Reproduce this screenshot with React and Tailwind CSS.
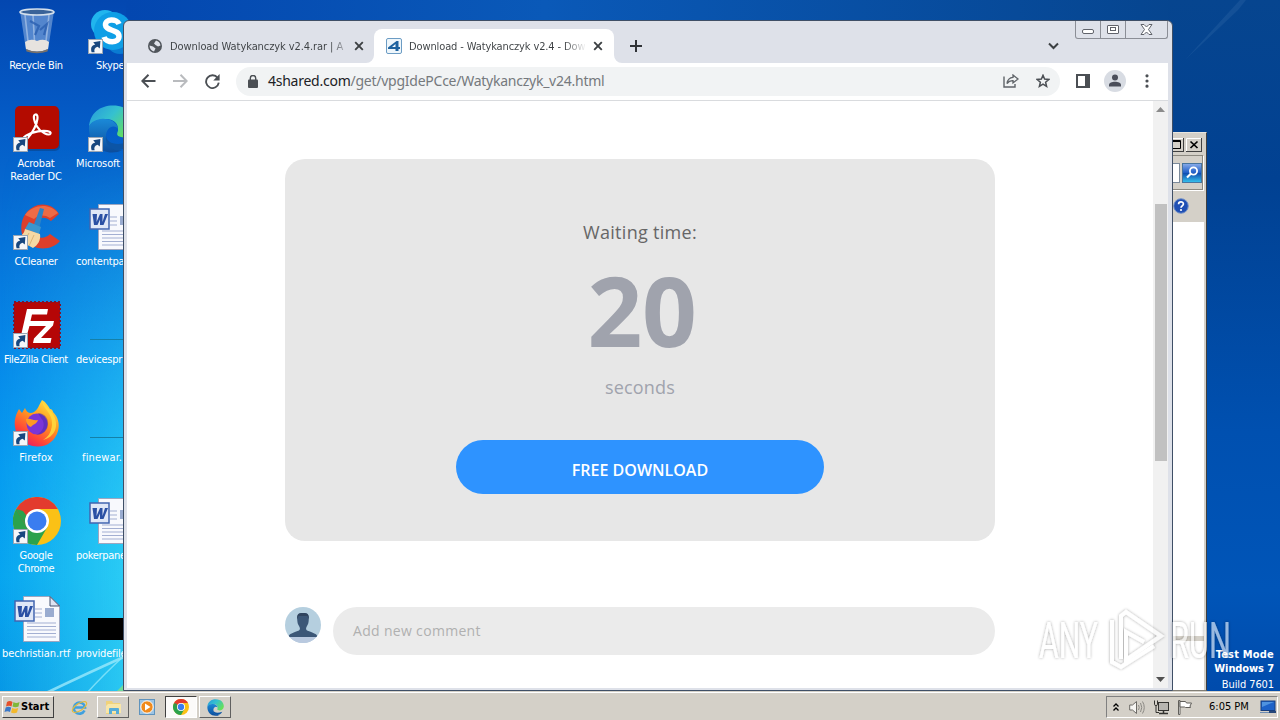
import React from "react";

const UI = "font-['DejaVu_Sans_Condensed','DejaVu_Sans',sans-serif]";

function Wallpaper() {
  return (
    <svg className="absolute inset-0" width="1280" height="720" viewBox="0 0 1280 720">
      <defs>
        <linearGradient id="wl" x1="0" y1="0" x2="0" y2="1">
          <stop offset="0" stopColor="#0347b0" />
          <stop offset="0.15" stopColor="#0459c4" />
          <stop offset="0.33" stopColor="#0672d8" />
          <stop offset="0.5" stopColor="#078aea" />
          <stop offset="0.65" stopColor="#079cf0" />
          <stop offset="0.8" stopColor="#08a6f0" />
          <stop offset="1" stopColor="#0795e4" />
        </linearGradient>
        <linearGradient id="wx" x1="0" y1="0" x2="1" y2="0">
          <stop offset="0" stopColor="#36d8f6" stopOpacity="0" />
          <stop offset="1" stopColor="#36d8f6" stopOpacity="0.75" />
        </linearGradient>
        <linearGradient id="wm" x1="0" y1="0" x2="0" y2="1">
          <stop offset="0.2" stopColor="#000" />
          <stop offset="0.75" stopColor="#fff" />
        </linearGradient>
        <mask id="mk"><rect width="126" height="720" fill="url(#wm)" /></mask>
        <linearGradient id="wr" x1="0" y1="0" x2="0" y2="1">
          <stop offset="0" stopColor="#06458f" />
          <stop offset="0.25" stopColor="#014192" />
          <stop offset="0.6" stopColor="#0050b0" />
          <stop offset="0.82" stopColor="#0055b8" />
          <stop offset="1" stopColor="#0048a8" />
        </linearGradient>
        <linearGradient id="wt" x1="0" y1="0" x2="1" y2="0">
          <stop offset="0" stopColor="#0347b0" />
          <stop offset="0.4" stopColor="#0a59b8" />
          <stop offset="1" stopColor="#06458f" />
        </linearGradient>
      </defs>
      <rect width="126" height="720" fill="url(#wl)" />
      <rect width="126" height="720" fill="url(#wx)" mask="url(#mk)" />
      <rect x="126" width="1046" height="30" fill="url(#wt)" />
      <rect x="1168" width="112" height="720" fill="url(#wr)" />
      <path d="M1185 60 L1238 10 L1246 0 L1240 0 Z" fill="#5f8fc0" opacity="0.16" />
      <path d="M44 694 Q90 672 126 656" stroke="#9be8fb" strokeWidth="2.5" fill="none" opacity="0.8" />
      <path d="M86 694 Q102 676 126 654" stroke="#8ce6fa" strokeWidth="1.5" fill="none" opacity="0.8" />
      <path d="M116 692 L126 682 V692 Z" fill="#6fdc9a" />
    </svg>
  );
}

function Shortcut() {
  return (
    <svg className="absolute bottom-[1px] left-0" width="15" height="15" viewBox="0 0 15 15">
      <rect x="0.5" y="0.5" width="14" height="14" fill="#f4f6f9" stroke="#9aa6b4" />
      <path d="M3.6 13.2 C2.4 9 3.6 6.4 7.2 5.6 L5.2 3.2 L12.4 2 L11.8 9.4 L9.6 7.8 C6.8 8.6 5.8 10.2 6.6 13.2 Z" fill="#17477f" />
    </svg>
  );
}

function RecycleBin() {
  return (
    <svg width="48" height="48" viewBox="0 0 48 48">
      <path d="M7 4 L41 4 L35 43 Q24 48 13 43 Z" fill="#88aede" opacity="0.6" />
      <path d="M12 8 L16 43 M20 8 L22 44 M36 8 L32 43" stroke="#c6d8f0" strokeWidth="1.6" opacity="0.55" />
      <path d="M17 14 L26 19 L22 28 M27 23 L34 17 L31 28" stroke="#2b5fb0" strokeWidth="2.2" fill="none" opacity="0.8" />
      <path d="M12 35 Q18 31 24 34 Q31 31 36 35 L35 42 Q24 47 13 42 Z" fill="#e7e3df" />
      <path d="M13 42 Q24 47 35 42 L34.500 44.500 Q24 48 13.500 44.500 Z" fill="#77706a" />
      <ellipse cx="24" cy="5" rx="17" ry="3" fill="#3a6399" stroke="#d5e0ec" strokeWidth="1.6" />
    </svg>
  );
}

function Skype() {
  return (
    <svg width="48" height="48" viewBox="0 0 48 48">
      <circle cx="17" cy="17" r="14" fill="#21b5ee" />
      <circle cx="32" cy="33" r="14" fill="#0a7bd2" />
      <circle cx="25" cy="24" r="19" fill="#0f9fe6" />
      <path d="M31 17 C29 11.500 17 11.500 17.500 18 C18 24.500 31 22 31 29.500 C31 36.500 18 36 16 30" stroke="#fff" strokeWidth="5.500" fill="none" />
    </svg>
  );
}

function Acrobat() {
  return (
    <svg width="48" height="48" viewBox="0 0 48 48">
      <rect x="2" y="3" width="45" height="43" rx="5" fill="#0a3c7c" opacity="0.5" />
      <rect x="2" y="1" width="44" height="43" rx="5" fill="#b30b00" />
      <path d="M22.500 9.500 C26 9 24.500 17 21.500 23 C18 30 12 37.500 10 35.500 C8 33 16 27.500 25 26.300 C32 25.400 38.500 26 37.500 28.500 C36 31.500 27.500 27.500 24 21.500 C21 16.500 19.500 10 22.500 9.500 Z" fill="none" stroke="#fff" strokeWidth="2.200" />
    </svg>
  );
}

function Edge({ size = 48 }) {
  return (
    <svg width={size} height={size} viewBox="0 0 48 48">
      <defs>
        <linearGradient id="eg1" x1="0" y1="0" x2="1" y2="0.6">
          <stop offset="0" stopColor="#2697dc" /><stop offset="0.5" stopColor="#35c1cf" /><stop offset="1" stopColor="#66e05a" />
        </linearGradient>
        <linearGradient id="eg2" x1="0" y1="0" x2="0" y2="1">
          <stop offset="0" stopColor="#1b8ad8" /><stop offset="1" stopColor="#0b4c9c" />
        </linearGradient>
      </defs>
      <path d="M1 22 C2 8 12 0.500 25 0.500 C40 0.500 48 11 47.500 21 C47 30 39 33 33 32 C28 31 29 28 30 26 C31 18 25 14 18 14 C9 14 2 18 1 22 Z" fill="url(#eg1)" />
      <path d="M1 22 C2 17 10 13 17 14 C25 14 30 20 30 24 C25 18 17 24 18 33 C19 40 27 47 35 45 C18 53 0 41 1 22 Z" fill="url(#eg2)" />
      <path d="M18 31 C19 38 28 42 43 36 C39 43 33 46 27 45 C20 42 17 37 18 31 Z" fill="#0c55a6" />
    </svg>
  );
}

function CCleaner() {
  return (
    <svg width="48" height="48" viewBox="0 0 48 48">
      <path d="M46 11 L38 18 C31 12 23 14 21 24 C20 35 30 38 37 31 L47 38 C38 49 17 48 10 34 C5 21 11 6 25 2 C34 0 42 4 46 11 Z" fill="#dd3f2b" />
      <path d="M45 10 L37 15 C31 11 25 12 21 16 L12 12 C20 1 37 0 45 10 Z" fill="#ee6b45" />
      <path d="M27 5 L31 6 L26 26 L20 24 Z" fill="#2c83c7" />
      <path d="M16 19 L28 24 L26 31 L12 26 Z" fill="#3b96ce" />
      <path d="M12 26 L27 31 C28 37 25 42 20 45 L2 35 C8 34 11 31 12 26 Z" fill="#f5d9a4" />
      <path d="M16 30 L11 39 M21 32 L16 43" stroke="#dcb377" strokeWidth="1" />
    </svg>
  );
}

function FileZilla() {
  return (
    <svg width="48" height="48" viewBox="0 0 48 48">
      <rect x="1" y="1" width="46" height="46" fill="#b50606" />
      <rect x="1" y="1" width="46" height="46" fill="none" stroke="#7c1430" strokeWidth="2" strokeDasharray="2 2" />
      <path d="M14 8 H35 L34 13.500 H19 L17.500 20 H28 L27 25 H16.500 L12.500 39 H7 Z" fill="#fff" />
      <path d="M25 20 H41 L40 24.500 L28 37 H38.500 L37.500 42 H20 L21 37.500 L33 25 H24 Z" fill="#fff" />
    </svg>
  );
}

function Firefox() {
  return (
    <svg width="48" height="48" viewBox="0 0 48 48">
      <defs>
        <linearGradient id="ff" x1="0.8" y1="0" x2="0.2" y2="1">
          <stop offset="0" stopColor="#ffe84a" /><stop offset="0.4" stopColor="#ff9a1f" /><stop offset="0.75" stopColor="#ff4438" /><stop offset="1" stopColor="#e3166b" />
        </linearGradient>
      </defs>
      <path d="M29 1 C33 3 35 7 37 10 C39 10 40 12 40 13 C45 18 47 25 45 32 C42 42 34 48 24 47.500 C12 47 3 39 2 28 C1 21 3 15 6 10 L9 14 L12 9 C13 12 15 14 18 14 C24 13 25 8 29 1 Z" fill="url(#ff)" />
      <circle cx="24" cy="25" r="10.500" fill="#7a35d8" />
      <path d="M13 20 C18 19 20 22 25 21 C24 25 20 25 18 28 C15 27 13 24 13 20 Z" fill="#ff9a22" />
      <path d="M25 14 C31 14 36 19 35 26 C34 33 28 36 23 36 C31 33 33 24 28 19 Z" fill="#4a2aa8" opacity="0.5" />
      <path d="M29 2 C30 10 40 14 39 26 C38 34 35 38 30 41 C42 38 46 27 41 17 C38 11 33 8 29 2 Z" fill="#ffdb3d" opacity="0.85" />
    </svg>
  );
}

function Chrome({ size = 48 }) {
  return (
    <svg width={size} height={size} viewBox="0 0 48 48">
      <circle cx="24" cy="24" r="24" fill="#fbc116" />
      <path d="M24 24 L3.200 12 A24 24 0 0 1 44.800 12 Z" fill="#e33b2e" />
      <path d="M24 12 H44.800 L34.400 30 Z" fill="#fbc116" />
      <path d="M3.200 12 A24 24 0 0 0 24 48 L34.400 30 L24 30 Z" fill="#2ba24c" />
      <path d="M3.200 12 L13.600 30 L24 24 L24 12 Z" fill="#e33b2e" />
      <path d="M3.200 12 L13.600 30 L16 22 L10 14 Z" fill="#2ba24c" />
      <circle cx="24" cy="24" r="12" fill="#fff" />
      <circle cx="24" cy="24" r="9.500" fill="#3a7df0" />
    </svg>
  );
}

function WordDoc() {
  return (
    <svg width="48" height="48" viewBox="0 0 48 48">
      <path d="M10.500 1.500 H37 L46.500 11 V46.500 H10.500 Z" fill="#f8f9fd" stroke="#9da6c0" />
      <path d="M37 1.500 V11 H46.500 Z" fill="#dde3f2" stroke="#42506e" />
      <path d="M22 14 H29 M22 18 H29 M22 22 H29 M14 28 H43 M14 31.500 H43 M14 35 H43 M14 38.500 H43 M14 42 H43" stroke="#a3afd2" />
      <rect x="32" y="13" width="9" height="9" fill="#9aacd0" />
      <rect x="2" y="6" width="19" height="20" fill="#dfe7f7" stroke="#4265b0" strokeWidth="1.500" />
      <path d="M4.500 11 H9 L8.500 19 L12 11 H14.500 L14.500 19 L17 11 H20 L15.500 22 H12 L12 16.500 L9.500 22 H6 Z" fill="#2a50a4" />
    </svg>
  );
}

function DesktopIcon({ icon, shortcut, children }) {
  return (
    <div className="flex h-[98px] w-[74px] flex-col items-center pt-[7px]">
      <div className="relative -ml-px h-12 w-12 shrink-0">{icon}{shortcut && <Shortcut />}</div>
      <div className="mt-1 -ml-[2px] text-center text-[11px] leading-[13px] whitespace-nowrap text-white">{children}</div>
    </div>
  );
}

function DesktopIconCut({ icon, shortcut, children }) {
  return (
    <div className="flex h-[98px] w-[49px] flex-col pt-[7px]">
      <div className="relative ml-[14px] h-12 w-12 shrink-0">{icon}{shortcut && <Shortcut />}</div>
      <div className="mt-1 ml-[2px] text-[11px] leading-[13px] whitespace-nowrap text-white">{children}</div>
    </div>
  );
}

function Line() {
  return <svg width="48" height="48" viewBox="0 0 48 48"><path d="M2 38.500 H48" stroke="#1480a8" /></svg>;
}

function Desktop() {
  return (
    <div className="relative flex flex-1">
      <div className="flex w-[74px] flex-col">
        <DesktopIcon icon={<RecycleBin />}><span className="tracking-[-0.3px]">Recycle Bin</span></DesktopIcon>
        <DesktopIcon icon={<Acrobat />} shortcut><span className="tracking-[-0.15px]">Acrobat<br />Reader DC</span></DesktopIcon>
        <DesktopIcon icon={<CCleaner />} shortcut><span className="tracking-[-0.25px]">CCleaner</span></DesktopIcon>
        <DesktopIcon icon={<FileZilla />} shortcut><span className="tracking-[-0.35px]">FileZilla Client</span></DesktopIcon>
        <DesktopIcon icon={<Firefox />} shortcut><span className="tracking-[0.1px]">Firefox</span></DesktopIcon>
        <DesktopIcon icon={<Chrome />} shortcut><span className="tracking-[-0.35px]">Google<br />Chrome</span></DesktopIcon>
        <DesktopIcon icon={<WordDoc />}><span className="tracking-[-0.1px]">bechristian.rtf</span></DesktopIcon>
      </div>
      <div className="flex w-[49px] flex-col">
        <DesktopIconCut icon={<Skype />} shortcut><span className="ml-5 tracking-[-0.3px]">Skype</span></DesktopIconCut>
        <DesktopIconCut icon={<Edge />} shortcut><span className="tracking-[-0.1px]">Microsoft</span></DesktopIconCut>
        <DesktopIconCut icon={<WordDoc />}><span className="tracking-[-0.2px]">contentpa</span></DesktopIconCut>
        <DesktopIconCut icon={<Line />}><span className="tracking-[-0.2px]">devicespr</span></DesktopIconCut>
        <DesktopIconCut icon={<Line />}><span className="ml-[6px] tracking-[0.15px]">finewar.</span></DesktopIconCut>
        <DesktopIconCut icon={<WordDoc />}><span className="tracking-[-0.3px]">pokerpane</span></DesktopIconCut>
        <DesktopIconCut icon={<svg width="48" height="48"><rect y="23" width="48" height="22" /></svg>}><span className="tracking-[-0.15px]">providefile</span></DesktopIconCut>
      </div>
    </div>
  );
}

function ExplorerWindow() {
  return (
    <div className="absolute top-[132px] left-[1140px] flex h-[559px] w-[67px] flex-col border border-t-[#e8e6e0] border-r-[#404040] border-b-[#807d75] bg-[#d4d0c8] pr-[2px]">
      <div className="flex h-[22px] items-start justify-end gap-[2px] pt-[5px] pr-[2px]">
        <svg width="16" height="14" viewBox="0 0 16 14"><path d="M0 0H16V14H0Z" fill="#d4d0c8" /><path d="M0 .5H15" stroke="#fff" /><path d="M15.500 0V14M0 13.500H16" stroke="#404040" /><path d="M3.500 2.500H12.500V10.500H3.500ZM3 3.500H13" fill="none" stroke="#000" /></svg>
        <svg width="16" height="14" viewBox="0 0 16 14"><path d="M0 0H16V14H0Z" fill="#d4d0c8" /><path d="M.5 14V.5H15" fill="none" stroke="#fff" /><path d="M15.500 0V14M0 13.500H16" stroke="#404040" /><path d="M4.500 3.500 L11.500 10 M11.500 3.500 L4.500 10" stroke="#000" strokeWidth="1.700" /></svg>
      </div>
      <div className="mr-px flex h-[35px] items-center justify-end border border-l-0 border-[#8c8980] shadow-[1px_1px_0_#fff]">
        <div className="mr-[2px] h-[20px] w-[30px] border border-[#7b8a9b] bg-white" />
        <svg width="20" height="20" viewBox="0 0 20 20">
          <defs><linearGradient id="sg" x1="0" y1="0" x2="0" y2="1"><stop stopColor="#8badea" /><stop offset="0.48" stopColor="#1f5ec8" /><stop offset="0.5" stopColor="#0f49ad" /><stop offset="1" stopColor="#36c4ee" /></linearGradient></defs>
          <rect x="0.500" y="0.500" width="19" height="19" fill="url(#sg)" stroke="#48759f" />
          <circle cx="11.500" cy="8" r="3.600" fill="none" stroke="#fff" strokeWidth="1.800" /><path d="M9 10.500 L5 14.500" stroke="#fff" strokeWidth="2.200" />
        </svg>
      </div>
      <div className="flex h-[32px] items-center justify-end">
        <svg className="mr-[15px]" width="16" height="16" viewBox="0 0 16 16">
          <circle cx="8" cy="8" r="7.300" fill="#1f4fb4" stroke="#7693c8" /><path d="M5.600 6.200 C5.600 3.200 10.400 3.200 10.400 6 C10.400 7.800 8 8 8 9.800" fill="none" stroke="#fff" strokeWidth="1.700" /><circle cx="8" cy="12" r="1.100" fill="#fff" />
        </svg>
      </div>
      <div className="flex-1 bg-white" />
      <div className="h-[5px] bg-[#d4d0c8]" />
      <div className="h-[49px] bg-white" />
    </div>
  );
}

function CloseX({ className }) {
  return <svg className={className} width="10" height="10" viewBox="0 0 10 10"><path d="M1.200 1.200 L8.800 8.800 M8.800 1.200 L1.200 8.800" stroke="#3c4043" strokeWidth="1.900" /></svg>;
}

function CaptionButtons() {
  return (
    <div className="flex h-[18px] w-[93px] rounded-b-[3px] border border-t-0 border-[#8b8e96]">
      <div className="flex w-[25px] items-end justify-center border-r border-[#8b8e96] pb-[4px]">
        <div className="h-[5px] w-3 rounded-[2px] border border-[#60636b] bg-white" />
      </div>
      <div className="flex w-[25px] items-center justify-center border-r border-[#8b8e96] pb-px">
        <div className="flex h-[9px] w-3 items-center justify-center rounded-[1px] border border-[#60636b] bg-white"><div className="h-[4px] w-[6px] border border-[#60636b]" /></div>
      </div>
      <div className="flex flex-1 items-center justify-center pb-px">
        <svg width="13" height="11" viewBox="0 0 13 11"><path d="M1 .5H4L6.500 3 9 .5H12L8.500 5.500 12 10.500H9L6.500 8 4 10.500H1L4.500 5.500Z" fill="#fff" stroke="#60636b" /></svg>
      </div>
    </div>
  );
}

function TabStrip() {
  return (
    <div className="flex h-[42px] shrink-0 items-end">
      <div className="flex h-[34px] w-[247px] items-center pl-[21px]">
        <svg width="14" height="14" viewBox="0 0 14 14"><circle cx="7" cy="7" r="7" fill="#50555b" /><path d="M8 1.500 C10.500 2 12.300 4 12.500 6.500 L10 7.500 L7.500 6 L6 4.500 Z M1.500 6.500 L5 7.500 L7.500 9.500 L6 12.500 C3.500 12 1.600 9.500 1.500 6.500 Z" fill="#dee1e9" /></svg>
        <div className="ml-2 w-[178px] overflow-hidden bg-linear-to-r from-[#3c4043] from-90% to-[#3c404320] bg-clip-text pt-px text-[11px] leading-[14px] tracking-[-0.08px] whitespace-nowrap text-transparent">Download Watykanczyk v2.4.rar | A</div>
        <CloseX className="ml-[6px]" />
      </div>
      <div className="relative flex h-[34px] w-[240px] items-center rounded-t-lg bg-white pl-3">
        <svg className="absolute bottom-0 -left-2" width="8" height="8"><path d="M8 0V8H0A8 8 0 0 0 8 0Z" fill="#fff" /></svg>
        <svg className="absolute -right-2 bottom-0" width="8" height="8"><path d="M0 0V8H8A8 8 0 0 1 0 0Z" fill="#fff" /></svg>
        <svg width="16" height="16" viewBox="0 0 16 16"><rect x="0.500" y="0.500" width="15" height="15" rx="1.500" fill="#eef6fb" stroke="#6c9cc4" /><path d="M10.500 3 H12.500 V9 H14 V11 H12.500 V13 H9.500 V11 H2 V9.500 Z M9.500 6 L6 9 H9.500 Z" fill="#1e629f" fillRule="evenodd" /></svg>
        <div className="ml-[7px] w-[176px] overflow-hidden bg-linear-to-r from-[#3c4043] from-88% to-[#3c404310] bg-clip-text pt-px text-[11px] leading-[14px] tracking-[-0.12px] whitespace-nowrap text-transparent">Download - Watykanczyk v2.4 - Dow</div>
        <CloseX className="ml-[8px]" />
      </div>
      <svg className="mb-[11px] ml-[16px]" width="12" height="12" viewBox="0 0 12 12"><path d="M6 0V12M0 6H12" stroke="#303337" strokeWidth="2" /></svg>
      <svg className="mb-[13px] ml-[406px]" width="11" height="8" viewBox="0 0 11 8"><path d="M1 1.500 L5.500 6 L10 1.500" fill="none" stroke="#3c4043" strokeWidth="2" /></svg>
      <div className="ml-[16px] self-start"><CaptionButtons /></div>
    </div>
  );
}

function Toolbar() {
  return (
    <div className="flex h-[38px] shrink-0 items-center border-b border-[#d9dbde] bg-white pb-px pl-[14px]">
      <svg width="15" height="14" viewBox="0 0 15 14"><path d="M14.500 7H2M7.500 .8 L1.300 7 L7.500 13.200" fill="none" stroke="#4b4f54" strokeWidth="2" /></svg>
      <svg className="ml-[17px]" width="15" height="14" viewBox="0 0 15 14"><path d="M0 7H13M7.500 .8 L13.700 7 L7.500 13.200" fill="none" stroke="#b9bbbe" strokeWidth="2" /></svg>
      <svg className="ml-[17px]" width="15" height="15" viewBox="0 0 16 16"><path d="M13.500 4.200 A6.800 6.800 0 1 0 14.700 9.300" fill="none" stroke="#4b4f54" strokeWidth="2" /><path d="M15.600 0V6.800H8.800Z" fill="#4b4f54" /></svg>
      <div className="ml-[16px] flex h-[29px] w-[824px] items-center rounded-full bg-[#f1f3f4] pl-3">
        <svg width="10" height="13" viewBox="0 0 10 13"><rect y="4.500" width="10" height="8.500" rx="1" fill="#4b4f54" /><path d="M2.300 5V3.200a2.700 2.700 0 0 1 5.400 0V5" fill="none" stroke="#4b4f54" strokeWidth="1.400" /></svg>
        <div className="ml-[10px] flex-1 font-['Noto_Sans',sans-serif] text-[14px] leading-[18px] tracking-[-0.25px] text-[#75797d]"><span className="text-[#202124]">4shared.com</span>/get/vpgIdePCce/Watykanczyk_v24.html</div>
        <svg width="16" height="14" viewBox="0 0 16 14"><path d="M1 2.500V13H12V10" fill="none" stroke="#5f6368" strokeWidth="1.400" /><path d="M10 1 L15 5 L10 9 V6.700 C7.500 6.500 5.500 7.500 4 9.500 C4.500 6 6.500 3.700 10 3.400Z" fill="none" stroke="#5f6368" strokeWidth="1.300" /></svg>
        <svg className="mr-[10px] ml-[17px]" width="14" height="14" viewBox="0 0 14 14"><path d="M7 1.300 L8.600 5.100 L12.800 5.500 L9.600 8.300 L10.600 12.400 L7 10.200 L3.400 12.400 L4.400 8.300 L1.200 5.500 L5.400 5.100Z" fill="none" stroke="#4b4f54" strokeWidth="1.500" /></svg>
      </div>
      <svg className="ml-[16px]" width="14" height="14" viewBox="0 0 14 14"><path d="M1 1H13V13H1Z" fill="#fff" stroke="#4b4f54" strokeWidth="2" /><path d="M9 0H14V14H9Z" fill="#4b4f54" /></svg>
      <svg className="ml-[14px]" width="22" height="22" viewBox="0 0 22 22"><circle cx="11" cy="11" r="11" fill="#d8dce3" /><circle cx="11" cy="7.500" r="3" fill="#4a4e5a" /><path d="M5 16.500V15C5 12.500 8 11.700 11 11.700S17 12.500 17 15V16.500Z" fill="#4a4e5a" /></svg>
      <svg className="ml-[19px]" width="4" height="14" viewBox="0 0 4 14"><path d="M2 .2a1.600 1.600 0 1 1 0 3.200a1.600 1.600 0 1 1 0-3.200M2 5.400a1.600 1.600 0 1 1 0 3.200a1.600 1.600 0 1 1 0-3.200M2 10.600a1.600 1.600 0 1 1 0 3.200a1.600 1.600 0 1 1 0-3.200" fill="#4b4f54" /></svg>
    </div>
  );
}

function Avatar() {
  return (
    <svg className="shrink-0" width="36" height="36" viewBox="0 0 36 36">
      <defs><clipPath id="av"><circle cx="18" cy="18" r="18" /></clipPath></defs>
      <g clipPath="url(#av)">
        <rect width="36" height="36" fill="#b5cfdf" /><rect y="30" width="36" height="6" fill="#b9c9df" />
        <path d="M3.500 30 C4 26.500 8 26 14 23.500 C15.500 22.500 15 20.500 14 19 C13 17.500 12.500 16 12.300 13.500 C11.500 5.500 15 6 18 6 C21 6 24.500 5.500 23.700 13.500 C23.500 16 23 17.500 22 19 C21 20.500 20.500 22.500 22 23.500 C28 26 32 26.500 32.500 30 Z" fill="#3c5777" />
        <path d="M12.300 12.500 C11.500 6.500 14.500 6 18 6 C21.500 6 24.500 6.500 23.700 12.500 L22.500 9 H13.500 Z" fill="#30445e" />
      </g>
    </svg>
  );
}

function Page() {
  return (
    <div className="flex min-h-0 flex-1 bg-white font-['Open_Sans',sans-serif]">
      <div className="flex flex-1 flex-col pt-[58px] pl-[158px]">
        <div className="flex h-[382px] w-[710px] flex-col items-center rounded-[20px] bg-[#e7e7e7]">
          <div className="mt-[59px] h-[28px] text-[18px] leading-[28px] tracking-[0.3px] text-[#666]">Waiting time:</div>
          <div className="mt-[16px] h-[98px] pl-[4px] text-[96px] leading-[96px] font-bold tracking-[-0.5px] text-[#a0a3ad]">20</div>
          <div className="mt-[13px] h-[28px] text-[18px] leading-[28px] tracking-[0.2px] text-[#a0a3ad]">seconds</div>
          <div className="mt-[39px] flex h-[54px] w-[368px] items-center justify-center rounded-full bg-[#2e93ff] pt-[6px] text-[16px] font-semibold text-white">FREE DOWNLOAD</div>
        </div>
        <div className="mt-[66px] flex gap-3">
          <Avatar />
          <div className="flex h-12 w-[662px] items-center rounded-full bg-[#ebebeb] pb-[2px] pl-5 text-[14px] tracking-[0.32px] text-[#b0b0b0]">Add new comment</div>
        </div>
      </div>
      <div className="flex w-[15px] flex-col items-center bg-[#f1f1f1]">
        <svg className="mt-[6px]" width="9" height="5"><path d="M0 5 L4.500 0 L9 5Z" fill="#8b8b8b" /></svg>
        <div className="mt-[92px] ml-px h-[257px] w-3 bg-[#c1c1c1]" />
        <svg className="mt-auto mb-[6px]" width="9" height="5"><path d="M0 0 L4.500 5 L9 0Z" fill="#505050" /></svg>
      </div>
    </div>
  );
}

function Browser() {
  return (
    <div className="absolute top-5 left-[123px] flex h-[671px] w-[1050px] flex-col overflow-hidden rounded-t-[6px] border border-[#3f4f66] bg-[#dee1e9] pr-[4px] pb-[2px] pl-[3px]">
      <TabStrip />
      <Toolbar />
      <Page />
    </div>
  );
}

function Taskbar() {
  return (
    <div className="relative flex h-[29px] items-start border-t border-[#d4d0c8] bg-[#d4d0c8] pt-1 shadow-[inset_0_1px_0_#fff]">
      <div className="ml-[2px] flex h-[22px] w-[52px] items-center border border-t-white border-r-[#404040] border-b-[#404040] border-l-white pl-[1px]">
        <svg width="17" height="16" viewBox="0 0 17 16">
          <path d="M3 3 C5 1.500 7 2 8.500 3 L7.500 7.500 C6 6.500 4 6.500 2 7.500Z" fill="#e5502a" /><path d="M9.500 3 C11.500 4.500 13.500 4 15.500 3 L14.500 7.500 C12.500 8.500 10.500 8.500 8.500 7.500Z" fill="#7fb83a" />
          <path d="M1.700 8.500 C3.500 7.500 5.500 7.700 7.200 8.500 L6 13 C4.500 12 2.500 12 .5 13Z" fill="#3a78c8" /><path d="M8.200 9 C10 10 12 10 14.200 9 L13 13.500 C11 14.500 9 14.500 7 13.500Z" fill="#f3b92c" />
        </svg>
        <span className="text-[11px] font-bold text-black">Start</span>
      </div>
      <svg className="mt-[3px] ml-[17px]" width="17" height="17" viewBox="0 0 17 17"><path d="M13.500 11.500 A5.600 5.600 0 1 1 14 8.500 H4" fill="none" stroke="#3fa0de" strokeWidth="2.600" /><ellipse cx="8.500" cy="8" rx="8.300" ry="3.500" transform="rotate(-33 8.500 8)" fill="none" stroke="#e3bb3c" strokeWidth="1.200" /></svg>
      <div className="ml-[9px] flex h-[22px] w-[32px] items-center justify-center border border-t-white border-r-[#606060] border-b-[#606060] border-l-white">
        <svg width="17" height="16" viewBox="0 0 17 16"><path d="M1 2H7L8 4H15V15H1Z" fill="#f0d27a" /><path d="M3 5H16V14H1V7Z" fill="#f8e6a8" /><path d="M4 15V10Q4 9 5 9H13Q14 9 14 10V15H11V12H7V15Z" fill="#58acd8" /></svg>
      </div>
      <svg className="mt-[3px] ml-[10px]" width="16" height="16" viewBox="0 0 16 16"><rect x="0.500" y="0.500" width="15" height="15" fill="#9cc4e4" stroke="#5f93bd" /><circle cx="8" cy="8" r="6.200" fill="#f08a1c" stroke="#fff" /><path d="M6 4.500V11.500L11.500 8Z" fill="#fff" /></svg>
      <div className="ml-[10px] flex h-[22px] w-[32px] items-center justify-center border border-t-[#404040] border-r-white border-b-white border-l-[#404040] bg-[#fbfaf9]"><Chrome size={16} /></div>
      <div className="ml-[2px] flex h-[22px] w-[32px] items-center justify-center border border-t-white border-r-[#606060] border-b-[#606060] border-l-white"><Edge size={17} /></div>
      <div className="mr-[2px] ml-auto flex h-[22px] w-[172px] items-center border border-t-[#808080] border-r-white border-b-white border-l-[#808080] pl-[6px]">
        <svg width="6" height="8" viewBox="0 0 6 8"><path d="M.5 3.500 L3 1 L5.500 3.500M.5 7.500 L3 5 L5.500 7.500" fill="none" stroke="#000" strokeWidth="1.300" /></svg>
        <svg className="ml-[10px]" width="16" height="15" viewBox="0 0 16 15"><path d="M.7 5H3.500L7.500 1.500V13.500L3.500 10H.7Z" fill="#f6f5f2" stroke="#6c6a66" /><path d="M9.500 5Q11 7.500 9.500 10M11.500 3Q14 7.500 11.500 12M13.500 1.500Q17 7.500 13.500 13.500" fill="none" stroke="#8b8984" /></svg>
        <svg className="ml-[8px]" width="17" height="15" viewBox="0 0 17 15"><rect x="5.500" y="2.500" width="10" height="8" fill="#b7b5b0" stroke="#33322f" /><path d="M6 13.500H15M10.500 11V13" stroke="#33322f" strokeWidth="1.500" /><path d="M1.500 .5V4.500Q1.500 5.500 3 5.500T4.500 4.500V.5M3 5.500V12.500H6" fill="none" stroke="#33322f" /></svg>
        <svg className="ml-[7px]" width="16" height="15" viewBox="0 0 16 15"><path d="M1.500 .5H3V14.500H1.500Z" fill="#fff" stroke="#605e5a" /><path d="M3 1.500H8.500L9.500 3H14.500L13 6L13.500 7.500H8.500L7.500 7H3Z" fill="#fff" stroke="#605e5a" /></svg>
        <span className="ml-[16px] text-[11px] whitespace-nowrap text-black">6:05 PM</span>
        <svg className="mr-[1px] ml-auto" width="16" height="14" viewBox="0 0 16 14"><rect x="1" y="1" width="14" height="9.500" fill="#1d62c8" stroke="#173e7e" /><path d="M2 2H14L2 7Z" fill="#4f93e0" /><path d="M0 12.500H9" stroke="#6d8cb3" /><path d="M9 12H16" stroke="#25477a" strokeWidth="2" /></svg>
      </div>
    </div>
  );
}

function Watermark() {
  return (
    <svg className="absolute top-[604px] left-[1034px]" width="204" height="72" viewBox="0 0 204 72">
      <defs><filter id="sh" x="-10%" y="-10%" width="120%" height="120%"><feDropShadow dx="0" dy="0" stdDeviation="1.800" floodColor="#000" floodOpacity="0.6" /></filter></defs>
      <g filter="url(#sh)" opacity="0.6">
        <text x="5" y="54" fontSize="50" textLength="59" lengthAdjust="spacingAndGlyphs" fill="#fff" className="font-['Roboto',sans-serif]">ANY</text>
        <text x="136" y="54" fontSize="50" textLength="61" lengthAdjust="spacingAndGlyphs" fill="#fff" className="font-['Roboto',sans-serif]">RUN</text>
        <path d="M87 55 V12 L92 8 L127 32 L92 56 V28 L110 38" fill="none" stroke="#fff" strokeWidth="4" />
        <path d="M78 16 V58 L87 63 L120 42" fill="none" stroke="#fff" strokeWidth="4" />
      </g>
    </svg>
  );
}

export default function App() {
  return (
    <div className={`relative flex h-[720px] w-[1280px] flex-col overflow-hidden ${UI}`}>
      <Wallpaper />
      <Desktop />
      <ExplorerWindow />
      <div className="absolute top-[648px] right-[6px] text-right text-[11px] leading-[14px] text-white">
        <div className="font-bold tracking-[0.2px]">Test Mode</div>
        <div className="font-bold tracking-[-0.1px]">Windows 7</div>
        <div className="mt-[2px] tracking-[-0.1px]">Build 7601</div>
      </div>
      <Browser />
      <Taskbar />
      <Watermark />
    </div>
  );
}
